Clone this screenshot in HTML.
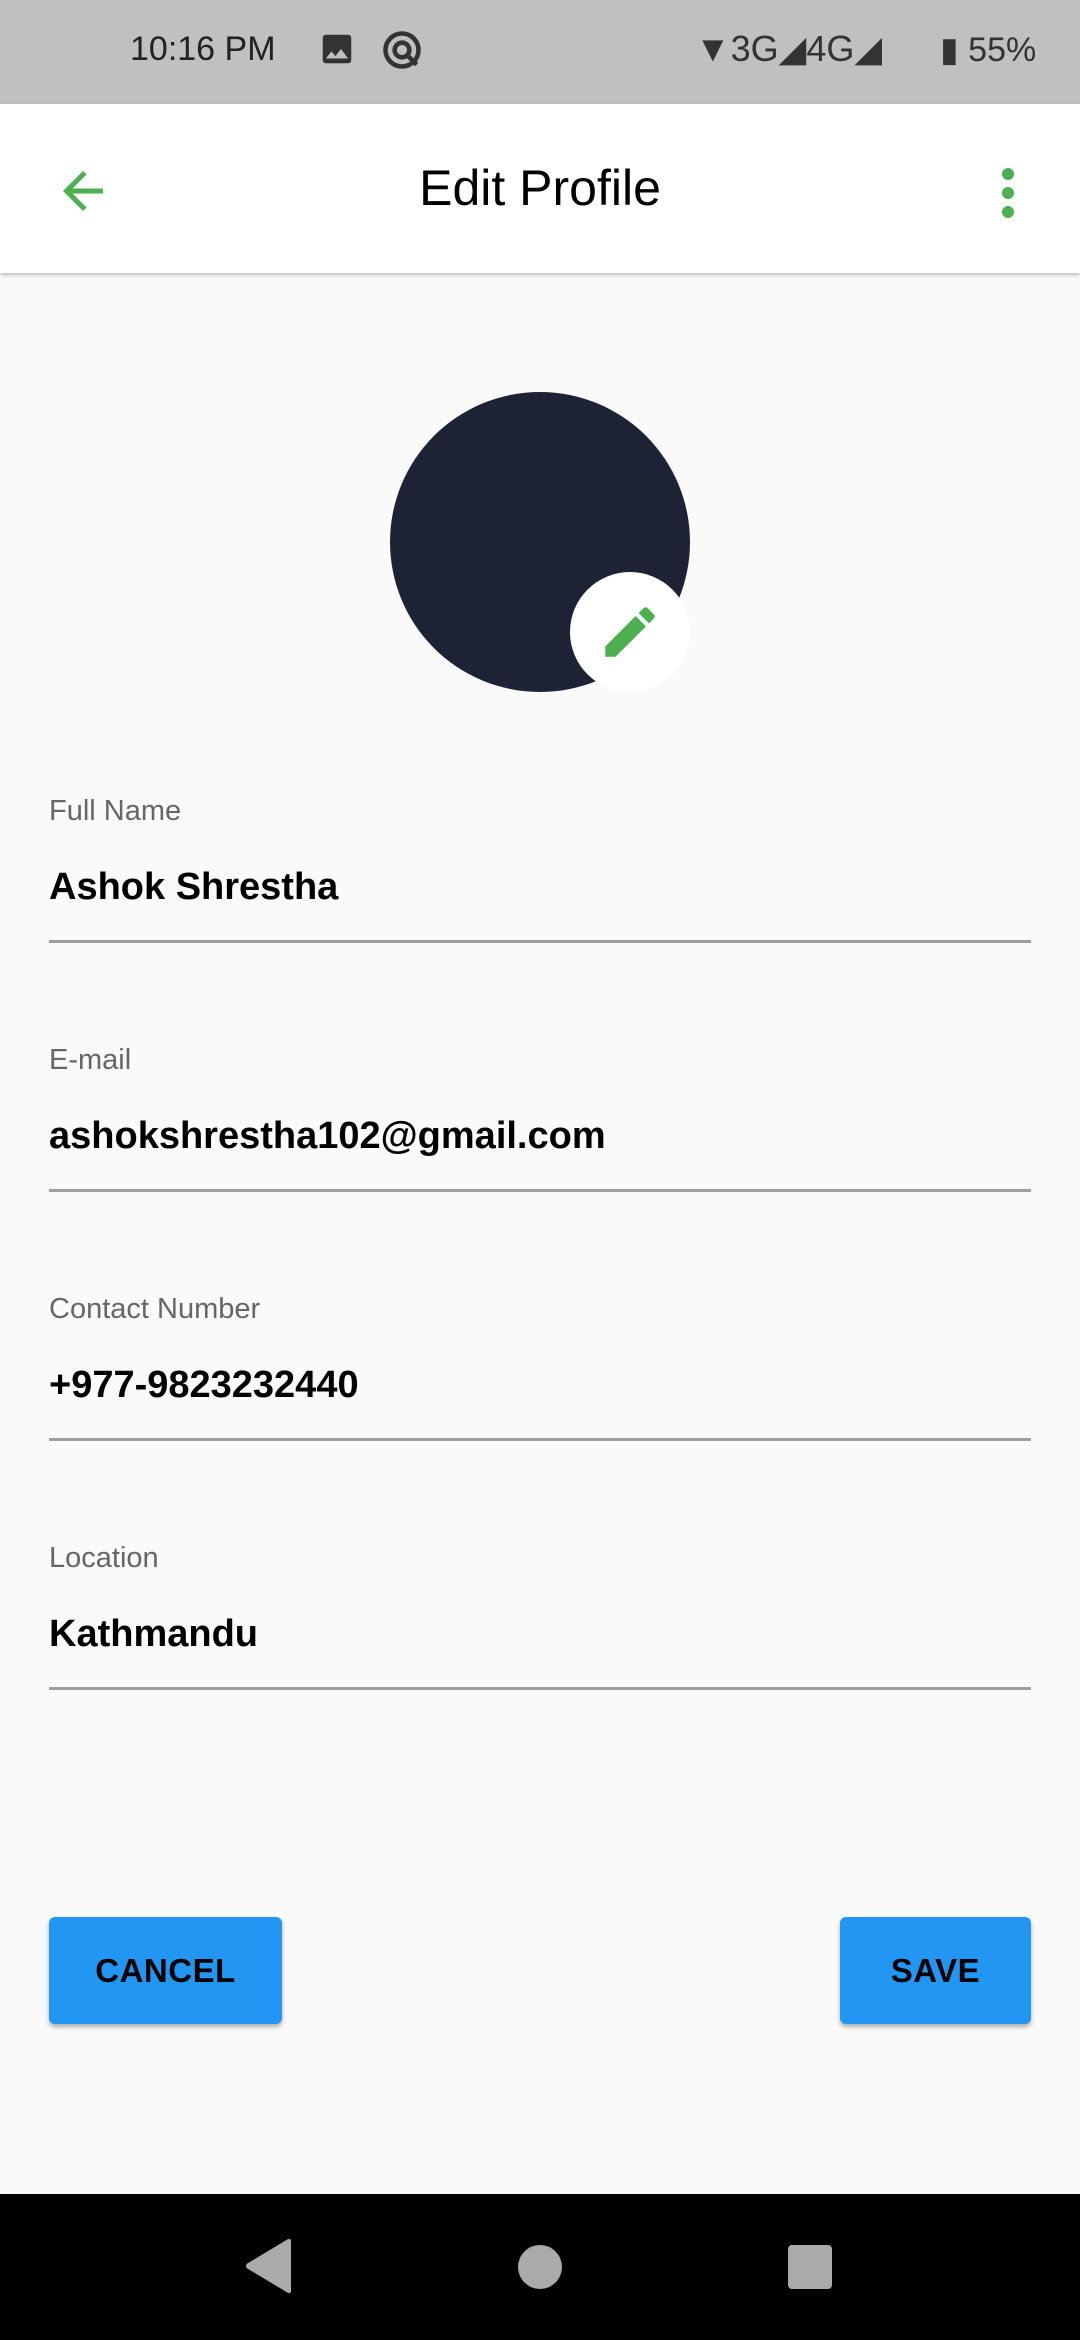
<!DOCTYPE html>
<html><head><meta charset="utf-8"><style>
*{margin:0;padding:0;box-sizing:border-box}
body{width:1080px;height:2340px;background:#fafafa;font-family:"Liberation Sans",sans-serif;position:relative;overflow:hidden}
.abs{position:absolute}
.status{left:0;top:0;width:1080px;height:104px;background:#c0c0c0}
.appbar{left:0;top:104px;width:1080px;height:169px;background:#fff;box-shadow:0 2px 4px rgba(0,0,0,.25)}
.lbl{left:49px;font-size:29px;color:#666}
.val{left:49px;font-size:38px;font-weight:bold;color:#000}
.line{left:49px;width:982px;height:3px;background:#9e9e9e}
.btn{top:1917px;height:107px;background:#2196f3;border-radius:6px;box-shadow:0 3px 5px rgba(0,0,0,.3);font-size:33px;color:#000;display:flex;align-items:center;justify-content:center;font-weight:bold;letter-spacing:0.5px}
</style></head><body>
<div class="abs status">
<div class="abs" style="left:130px;top:30px;font-size:34px;color:#222">10:16 PM</div>
<svg class="abs" style="left:318px;top:30px" width="38" height="38" viewBox="0 0 24 24"><path fill="#333" d="M21 19V5a2 2 0 0 0-2-2H5a2 2 0 0 0-2 2v14a2 2 0 0 0 2 2h14a2 2 0 0 0 2-2zM8.5 13.5l2.5 3 3.5-4.5 4.5 6H5l3.5-4.5z"/></svg>
<svg class="abs" style="left:380px;top:28px" width="44" height="44" viewBox="0 0 24 24"><circle cx="12" cy="12" r="9" fill="none" stroke="#333" stroke-width="2.5"/><circle cx="12" cy="12" r="4" fill="none" stroke="#333" stroke-width="2.5"/><path d="M14 14l6 6" stroke="#333" stroke-width="2.5"/></svg>
<div class="abs" style="left:695px;top:28px;font-size:36px;color:#333">▼3G◢4G◢</div>
<div class="abs" style="left:940px;top:30px;font-size:34px;color:#333">▮ 55%</div>
</div>
<div class="abs appbar">
<svg class="abs" style="left:53px;top:57px" width="60" height="60" viewBox="0 0 24 24"><path fill="#4caf50" d="M20 11H7.83l5.59-5.59L12 4l-8 8 8 8 1.41-1.41L7.83 13H20v-2z"/></svg>
<div class="abs" style="left:0;width:1080px;top:55px;text-align:center;font-size:50px;color:#000">Edit Profile</div>
<div class="abs" style="left:1002px;top:64px;width:12px;height:12px;border-radius:50%;background:#4caf50;box-shadow:0 19px 0 #4caf50,0 38px 0 #4caf50"></div>
</div>
<div class="abs" style="left:390px;top:392px;width:300px;height:300px;border-radius:50%;background:#1e2235"></div>
<div class="abs" style="left:570px;top:572px;width:120px;height:120px;border-radius:50%;background:#fff"></div>
<svg class="abs" style="left:597px;top:599px" width="66" height="66" viewBox="0 0 24 24"><path fill="#4caf50" d="M3 17.25V21h3.75L17.81 9.94l-3.75-3.75L3 17.25zM20.71 7.04a1 1 0 0 0 0-1.41l-2.34-2.34a1 1 0 0 0-1.41 0l-1.83 1.83 3.75 3.75 1.83-1.83z"/></svg>

<div class="abs lbl" style="top:795px">Full Name</div>
<div class="abs val" style="top:866px">Ashok Shrestha</div>
<div class="abs line" style="top:940px"></div>
<div class="abs lbl" style="top:1044px">E-mail</div>
<div class="abs val" style="top:1115px">ashokshrestha102@gmail.com</div>
<div class="abs line" style="top:1189px"></div>
<div class="abs lbl" style="top:1293px">Contact Number</div>
<div class="abs val" style="top:1364px">+977-9823232440</div>
<div class="abs line" style="top:1438px"></div>
<div class="abs lbl" style="top:1542px">Location</div>
<div class="abs val" style="top:1613px">Kathmandu</div>
<div class="abs line" style="top:1687px"></div>

<div class="abs btn" style="left:49px;width:233px">CANCEL</div>
<div class="abs btn" style="left:840px;width:191px">SAVE</div>

<div class="abs" style="left:0;top:2194px;width:1080px;height:146px;background:#000">
<svg class="abs" style="left:245px;top:44px" width="46" height="56" viewBox="0 0 46 56"><path d="M44 4 L4 28 L44 52 Z" fill="#aaa" stroke="#aaa" stroke-width="6" stroke-linejoin="round"/></svg>
<div class="abs" style="left:518px;top:51px;width:44px;height:44px;border-radius:50%;background:#aaa"></div>
<div class="abs" style="left:788px;top:51px;width:44px;height:44px;border-radius:4px;background:#aaa"></div>
</div>
</body></html>
